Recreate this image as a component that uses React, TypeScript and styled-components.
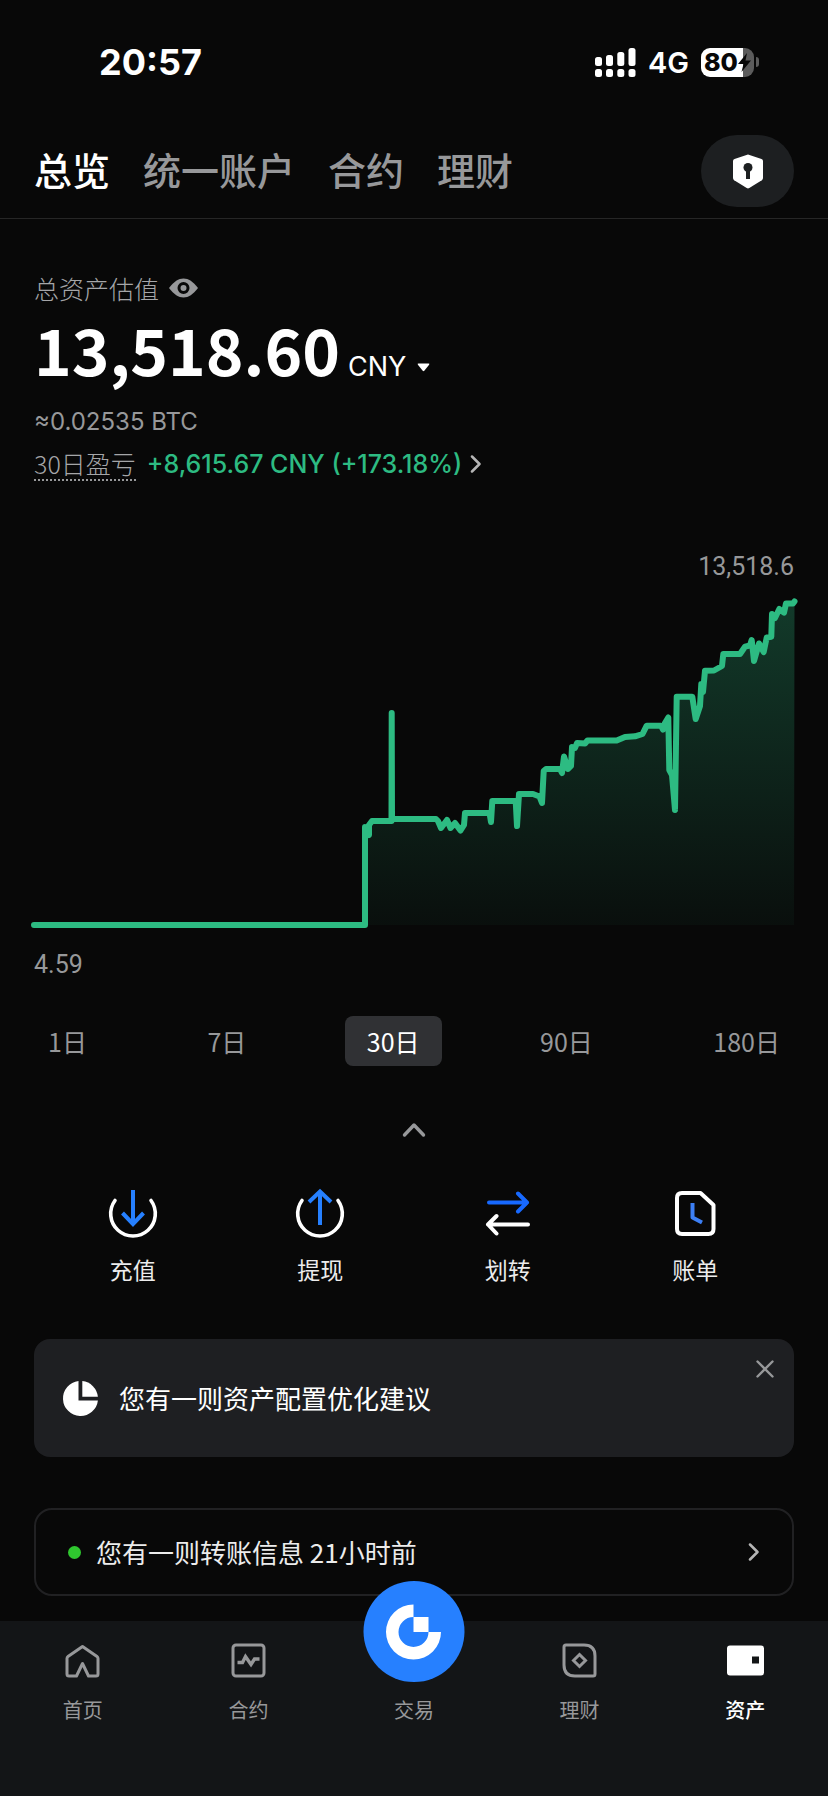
import React, { useState } from 'react';
import styled, { createGlobalStyle } from 'styled-components';

const colors = {
  page: '#080808',
  panel: '#1e1f22',
  bar: '#131517',
  line: '#212123',
  text: '#ffffff',
  soft: '#ececec',
  muted: '#97989a',
  faint: '#a5a6a8',
  green: '#2dbb82',
  blue: '#2680ff',
};

const GlobalStyle = createGlobalStyle`
  *, *::before, *::after { box-sizing: border-box; }
  body {
    margin: 0;
    background: ${colors.page};
    color: ${colors.text};
    font-family: "Noto Sans CJK SC", sans-serif;
  }
  button {
    padding: 0;
    border: 0;
    background: none;
    color: inherit;
    font: inherit;
    cursor: pointer;
  }
  a { color: inherit; text-decoration: none; }
  svg { display: block; flex: none; }
`;

const Screen = styled.div`
  display: flex;
  flex-direction: column;
  min-height: 100vh;
`;

const StatusBar = styled.div`
  display: flex;
  align-items: center;
  justify-content: space-between;
  height: 124px;
  padding: 0 69px 0 99px;
  font-family: Inter, sans-serif;
`;

const Clock = styled.time`
  font-size: 36px;
  font-weight: 700;
`;

const StatusIcons = styled.div`
  display: flex;
  align-items: center;
  gap: 12px;
  font-size: 29px;
  font-weight: 600;
`;

const Battery = styled.div`
  display: flex;
  align-items: center;
  gap: 2px;
`;

const BatteryBody = styled.div`
  display: flex;
  align-items: center;
  width: 53px;
  height: 29px;
  padding-left: 3px;
  border-radius: 9px;
  background: linear-gradient(90deg, #fff 80%, #5c5c5c 80%);
  color: #080808;
  font-size: 25px;
  font-weight: 800;
  line-height: 29px;
`;

const BatteryTip = styled.span`
  width: 3px;
  height: 10px;
  border-radius: 0 3px 3px 0;
  background: #5c5c5c;
`;

const Header = styled.header`
  display: flex;
  align-items: center;
  justify-content: space-between;
  height: 95px;
  padding: 0 34px;
  border-bottom: 1px solid #262626;
`;

const Tabs = styled.nav`
  display: flex;
  gap: 33px;
  padding-bottom: 4px;
`;

const Tab = styled.button<{ $active: boolean }>`
  color: ${(p) => (p.$active ? colors.text : colors.muted)};
  font-size: 38px;
  font-weight: 500;
  line-height: 48px;
`;

const ShieldButton = styled.button`
  display: grid;
  place-items: center;
  width: 93px;
  height: 72px;
  border-radius: 36px;
  background: #1d1f21;
`;

const Main = styled.main`
  display: flex;
  flex-direction: column;
  padding: 53px 34px 25px;
`;

const Row = styled.div`
  display: flex;
  align-items: center;
  gap: 10px;
`;

const Caption = styled.span`
  color: ${colors.faint};
  font-size: 25px;
  font-weight: 300;
  line-height: 32px;
`;

const Total = styled.div`
  display: flex;
  align-items: baseline;
  gap: 8px;
  height: 80px;
  margin: 10px 0 12px;
  line-height: 68px;
`;

const Amount = styled.strong`
  font-size: 64px;
  font-weight: 700;
`;

const Currency = styled.button`
  display: flex;
  align-items: center;
  gap: 11px;
  font-family: Inter, sans-serif;
  font-size: 27px;
  line-height: 32px;
`;

const Converted = styled.div`
  color: ${colors.muted};
  font-family: Inter, sans-serif;
  font-size: 24px;
  line-height: 32px;
`;

const PnlRow = styled.div`
  display: flex;
  align-items: center;
  gap: 11px;
  margin-top: 9px;
`;

const PnlLabel = styled.span`
  border-bottom: 2px dotted ${colors.muted};
  color: ${colors.faint};
  font-size: 25px;
  font-weight: 300;
  line-height: 32px;
`;

const PnlLink = styled.a`
  display: flex;
  align-items: center;
  gap: 8px;
  color: ${colors.green};
  font-family: Inter, sans-serif;
  font-size: 25px;
  font-weight: 500;
  line-height: 32px;
`;

const ChartFigure = styled.figure`
  display: flex;
  flex-direction: column;
  margin: 70px 0 35px;
`;

const ChartLabel = styled.span<{ $end?: boolean }>`
  align-self: ${(p) => (p.$end ? 'flex-end' : 'flex-start')};
  color: ${colors.muted};
  font-family: Roboto, sans-serif;
  font-size: 25px;
  line-height: 32px;
`;

const ChartSvg = styled.svg`
  width: 100%;
  height: 328px;
  margin: 17px 0 21px;
  overflow: visible;
`;

const Ranges = styled.div`
  display: flex;
  justify-content: space-between;
  margin: 0 -8px;
`;

const Range = styled.button<{ $active: boolean }>`
  height: 50px;
  padding: 0 22px;
  border-radius: 8px;
  background: ${(p) => (p.$active ? '#303134' : 'transparent')};
  color: ${(p) => (p.$active ? colors.text : colors.muted)};
  font-size: 25px;
`;

const CollapseButton = styled.button`
  align-self: center;
  margin: 48px 0 42px;
  padding: 8px;
`;

const Actions = styled.div`
  display: grid;
  grid-template-columns: repeat(4, 1fr);
  padding: 0 5px;
`;

const Action = styled.button`
  display: flex;
  flex-direction: column;
  align-items: center;
  gap: 15px;
  color: ${colors.soft};
  font-size: 23px;
  line-height: 32px;
`;

const Suggestion = styled.section`
  display: flex;
  align-items: center;
  height: 118px;
  margin: 54px 0 51px;
  padding: 0 20px 0 28px;
  border-radius: 16px;
  background: ${colors.panel};
`;

const CardText = styled.span`
  flex: 1;
  font-size: 26px;
  line-height: 32px;
`;

const SuggestionText = styled(CardText)`
  margin-left: 20px;
`;

const CloseButton = styled.button`
  align-self: flex-start;
  margin-top: 21px;
`;

const Notice = styled.a`
  display: flex;
  align-items: center;
  height: 88px;
  padding: 0 32px;
  border: 2px solid ${colors.line};
  border-radius: 18px;
  color: ${colors.soft};
`;

const Dot = styled.span`
  width: 13px;
  height: 13px;
  margin-right: 15px;
  border-radius: 50%;
  background: #2fc72f;
`;

const TabBar = styled.nav`
  position: sticky;
  bottom: 0;
  display: grid;
  grid-template-columns: repeat(5, 1fr);
  margin-top: auto;
  padding: 21px 0 71px;
  background: ${colors.bar};
`;

const TabItem = styled.a<{ $active?: boolean }>`
  position: relative;
  display: flex;
  flex-direction: column;
  align-items: center;
  gap: 16px;
  color: ${(p) => (p.$active ? colors.text : colors.muted)};
  font-size: 20px;
  font-weight: ${(p) => (p.$active ? 500 : 400)};
  line-height: 30px;
`;

const IconSlot = styled.span`
  height: 37px;
`;

const TradeBadge = styled.span`
  position: absolute;
  top: -61px;
  left: 50%;
  display: grid;
  place-items: center;
  width: 101px;
  height: 101px;
  border-radius: 50%;
  background: ${colors.blue};
  transform: translateX(-50%);
`;

const SignalIcon = () => (
  <svg width="41" height="29" viewBox="0 0 41 29" fill="#fff" aria-hidden="true">
    <rect x="0" y="9" width="7" height="9" rx="2.5" />
    <rect x="11" y="7" width="7" height="11" rx="2.5" />
    <rect x="22.3" y="4" width="7" height="14" rx="2.5" />
    <rect x="33.5" y="0" width="7" height="18" rx="2.5" />
    <rect x="0" y="21" width="7" height="8" rx="2.5" />
    <rect x="11" y="21" width="7" height="8" rx="2.5" />
    <rect x="22.3" y="21" width="7" height="8" rx="2.5" />
    <rect x="33.5" y="21" width="7" height="8" rx="2.5" />
  </svg>
);

const BoltIcon = () => (
  <svg width="13" height="19" viewBox="0 0 13 19" fill="#080808" aria-hidden="true">
    <path d="M9 0 0 11h5.5L3.5 19 13 7.5H7.5Z" />
  </svg>
);

const ShieldIcon = () => (
  <svg width="30" height="35" viewBox="0 0 30 35" aria-hidden="true">
    <path d="M15 0.5 28.5 5Q30 5.6 30 7V24Q30 25.5 28.8 26.3L16.3 34Q15 34.8 13.7 34L1.2 26.3Q0 25.5 0 24V7Q0 5.6 1.5 5Z" fill="#fff" />
    <circle cx="15" cy="13.5" r="4.5" fill="#1d1f21" />
    <path d="M15 15v10" stroke="#1d1f21" strokeWidth="4" />
  </svg>
);

const EyeIcon = () => (
  <svg width="29" height="20" viewBox="0 0 29 20" aria-hidden="true">
    <path d="M0 10C5 3.5 9.5 0.5 14.5 0.5S24 3.5 29 10C24 16.5 19.5 19.5 14.5 19.5S5 16.5 0 10Z" fill={colors.muted} />
    <circle cx="14.5" cy="10" r="4.5" fill="none" stroke={colors.page} strokeWidth="3" />
  </svg>
);

const CaretDown = () => (
  <svg width="13" height="9" viewBox="0 0 13 9" fill="currentColor" aria-hidden="true">
    <path d="M1.5 0.5H11.5Q13 0.5 12.1 1.7L7.3 7.8Q6.5 8.7 5.7 7.8L0.9 1.7Q0 0.5 1.5 0.5Z" />
  </svg>
);

const ChevronRight = ({ color }: { color: string }) => (
  <svg width="12" height="18" viewBox="0 0 12 18" fill="none" stroke={color} strokeWidth="2.5" strokeLinecap="round" strokeLinejoin="round" aria-hidden="true">
    <path d="M2 1.5 9.5 9 2 16.5" />
  </svg>
);

const ChevronUp = () => (
  <svg width="24" height="16" viewBox="0 0 24 16" fill="none" stroke={colors.muted} strokeWidth="3.4" strokeLinecap="round" strokeLinejoin="round" aria-hidden="true">
    <path d="M2.5 13 12 3l9.5 10" />
  </svg>
);

const CloseIcon = () => (
  <svg width="18" height="18" viewBox="0 0 18 18" stroke={colors.muted} strokeWidth="2.4" strokeLinecap="round" aria-hidden="true">
    <path d="M1.5 1.5 16.5 16.5M16.5 1.5 1.5 16.5" />
  </svg>
);

const PieIcon = () => (
  <svg width="37" height="37" viewBox="0 0 37 37" fill="#fff" aria-hidden="true">
    <path d="M16.5 1.1A17.5 17.5 0 1 0 35.9 20.5H16.5Z" />
    <path d="M20.3 1.1A17.5 17.5 0 0 1 35.9 16.7H20.3Z" />
  </svg>
);

const actionIconProps = {
  width: 50,
  height: 50,
  viewBox: '0 0 50 50',
  fill: 'none',
  strokeLinecap: 'round' as const,
  strokeLinejoin: 'round' as const,
  'aria-hidden': true,
};

const DepositIcon = () => (
  <svg {...actionIconProps}>
    <path d="M7 12.5A22.3 22.3 0 1 0 43 12.5" stroke="#fff" strokeWidth="3.6" />
    <path d="M25 2V36M14.5 25 25 36 35.5 25" stroke={colors.blue} strokeWidth="4" strokeLinejoin="miter" strokeLinecap="butt" />
  </svg>
);

const WithdrawIcon = () => (
  <svg {...actionIconProps}>
    <path d="M7 12.5A22.3 22.3 0 1 0 43 12.5" stroke="#fff" strokeWidth="3.6" />
    <path d="M25 37V3M14 14 25 3.5 36 14" stroke={colors.blue} strokeWidth="4" strokeLinejoin="miter" strokeLinecap="butt" />
  </svg>
);

const TransferIcon = () => (
  <svg {...actionIconProps} strokeWidth="4">
    <path d="M6 14.5H44M35 5.5 44 14.5 35 23.5" stroke="#1769ff" />
    <path d="M45 36.5H5M13.5 28 5 36.5 13.5 45.5" stroke="#fff" />
  </svg>
);

const BillIcon = () => (
  <svg {...actionIconProps}>
    <path d="M12 5H30.5L43.5 17V41Q43.5 46 38.5 46H12Q7 46 7 41V10Q7 5 12 5Z" stroke="#fff" strokeWidth="4" />
    <path d="M22.5 15V29.5L32 34.5" stroke="#3c7ff5" strokeWidth="4" strokeLinecap="butt" />
  </svg>
);

const navIconProps = {
  width: 37,
  height: 37,
  viewBox: '0 0 37 37',
  fill: 'none',
  stroke: 'currentColor',
  strokeWidth: 3,
  strokeLinejoin: 'round' as const,
  'aria-hidden': true,
};

const HomeIcon = () => (
  <svg {...navIconProps}>
    <path d="M18.5 4.5 33 14.5Q34 15.2 34 16.5V32Q34 34 32 34H24.5L18.5 21.5 12.5 34H5Q3 34 3 32V16.5Q3 15.2 4 14.5Z" />
  </svg>
);

const FuturesIcon = () => (
  <svg {...navIconProps}>
    <rect x="3" y="3" width="31" height="31" rx="3" />
    <path d="M7.5 20.5H12.5L15.5 14.5 21 22.5 24.5 17H29.5" strokeWidth="3.4" strokeLinejoin="miter" />
  </svg>
);

const EarnIcon = () => (
  <svg {...navIconProps}>
    <path d="M5 3H23Q34 3 34 14V32Q34 34 32 34H14Q3 34 3 23V5Q3 3 5 3Z" />
    <path d="M18.5 12.5 24.5 18.5 18.5 24.5 12.5 18.5Z" strokeLinejoin="miter" />
  </svg>
);

const WalletIcon = () => (
  <svg {...navIconProps} stroke="none" fill="currentColor">
    <path fillRule="evenodd" d="M3 3.5H34Q37 3.5 37 6.5V30.5Q37 33.5 34 33.5H3Q0 33.5 0 30.5V6.5Q0 3.5 3 3.5ZM25 14.5V21.5H32V14.5Z" />
  </svg>
);

const TradeLogo = () => (
  <svg width="56" height="56" viewBox="0 0 56 56" fill="#fff" aria-hidden="true">
    <path d="M28 0.5A27.5 27.5 0 1 0 55.5 28H43A15 15 0 1 1 28 13Z" />
    <path d="M28 13H43V28H28Z" />
  </svg>
);

// Equity curve in chart units: 760 wide, baseline at 325.
const curve: [number, number][] = [
  [0, 325], [331, 325], [331, 227], [335, 235], [335, 225], [338, 221], [357.5, 221], [357.7, 113], [358, 219],
  [402, 219], [404, 221], [407, 228], [413, 220], [416.5, 228], [421, 223], [426.5, 230.5], [430, 225], [431, 213],
  [455.5, 212.7], [457, 222], [458.3, 201], [481.7, 201], [483, 226], [485, 194], [499, 194], [505.5, 196.5],
  [508, 203], [509.7, 171], [512, 169], [526, 169], [528, 173], [530, 156.5], [534, 169], [537, 166], [538, 147],
  [541, 148], [543, 143], [551, 143.5], [553.5, 140.5], [582.7, 140.5], [591, 137], [601, 136.3], [608.5, 134],
  [612.7, 125.7], [627, 125.7], [629, 129.5], [631, 123], [634.3, 117.5], [635.3, 170], [638, 175], [641, 210],
  [642.7, 96.7], [658.3, 96.7], [661.7, 119], [666, 106], [667.3, 84], [669, 92], [671, 70.7], [680, 70.5],
  [688, 66], [689.3, 54], [706, 54], [711, 46.7], [716, 45.5], [717.7, 40], [720, 61], [725, 43.5],
  [729.7, 52], [732.7, 37.5], [737.3, 36.7], [738, 14], [741, 18], [745.3, 9], [750, 12.7], [752, 3.5],
  [759, 3.5], [760.5, 1.5],
];
const curvePoints = curve.map(([x, y]) => `${x},${y}`).join(' ');

const EquityChart = () => (
  <ChartSvg viewBox="0 0 760 328" preserveAspectRatio="none" role="img" aria-label="30日资产走势">
    <defs>
      <linearGradient id="equityFill" gradientUnits="userSpaceOnUse" x1="0" y1="0" x2="0" y2="325">
        <stop offset="0" stopColor={colors.green} stopOpacity="0.28" />
        <stop offset="1" stopColor={colors.green} stopOpacity="0.04" />
      </linearGradient>
    </defs>
    <polygon points={`${curvePoints} 760,325`} fill="url(#equityFill)" />
    <polyline
      points={curvePoints}
      fill="none"
      stroke={colors.green}
      strokeWidth="6"
      strokeLinecap="round"
      strokeLinejoin="round"
      vectorEffect="non-scaling-stroke"
    />
  </ChartSvg>
);

const accountTabs = ['总览', '统一账户', '合约', '理财'];
const rangeOptions = ['1日', '7日', '30日', '90日', '180日'];
const actions = [
  { label: '充值', icon: <DepositIcon /> },
  { label: '提现', icon: <WithdrawIcon /> },
  { label: '划转', icon: <TransferIcon /> },
  { label: '账单', icon: <BillIcon /> },
];
const navItems = [
  { label: '首页', icon: <HomeIcon /> },
  { label: '合约', icon: <FuturesIcon /> },
  { label: '交易', icon: <TradeBadge><TradeLogo /></TradeBadge> },
  { label: '理财', icon: <EarnIcon /> },
  { label: '资产', icon: <WalletIcon />, active: true },
];

export default function App() {
  const [tab, setTab] = useState('总览');
  const [range, setRange] = useState('30日');

  return (
    <Screen>
      <GlobalStyle />
      <StatusBar>
        <Clock>20:57</Clock>
        <StatusIcons>
          <SignalIcon />
          <span>4G</span>
          <Battery>
            <BatteryBody>80<BoltIcon /></BatteryBody>
            <BatteryTip />
          </Battery>
        </StatusIcons>
      </StatusBar>

      <Header>
        <Tabs>
          {accountTabs.map((name) => (
            <Tab key={name} type="button" $active={name === tab} onClick={() => setTab(name)}>
              {name}
            </Tab>
          ))}
        </Tabs>
        <ShieldButton type="button" aria-label="安全">
          <ShieldIcon />
        </ShieldButton>
      </Header>

      <Main>
        <Row>
          <Caption>总资产估值</Caption>
          <button type="button" aria-label="隐藏金额">
            <EyeIcon />
          </button>
        </Row>
        <Total>
          <Amount>13,518.60</Amount>
          <Currency type="button">
            CNY
            <CaretDown />
          </Currency>
        </Total>
        <Converted>≈0.02535 BTC</Converted>
        <PnlRow>
          <PnlLabel>30日盈亏</PnlLabel>
          <PnlLink href="#pnl">
            +8,615.67 CNY (+173.18%)
            <ChevronRight color="#b5b5b5" />
          </PnlLink>
        </PnlRow>

        <ChartFigure>
          <ChartLabel $end>13,518.6</ChartLabel>
          <EquityChart />
          <ChartLabel>4.59</ChartLabel>
        </ChartFigure>

        <Ranges>
          {rangeOptions.map((name) => (
            <Range key={name} type="button" $active={name === range} onClick={() => setRange(name)}>
              {name}
            </Range>
          ))}
        </Ranges>
        <CollapseButton type="button" aria-label="收起">
          <ChevronUp />
        </CollapseButton>

        <Actions>
          {actions.map(({ label, icon }) => (
            <Action key={label} type="button">
              {icon}
              {label}
            </Action>
          ))}
        </Actions>

        <Suggestion>
          <PieIcon />
          <SuggestionText>您有一则资产配置优化建议</SuggestionText>
          <CloseButton type="button" aria-label="关闭">
            <CloseIcon />
          </CloseButton>
        </Suggestion>

        <Notice href="#notice">
          <Dot />
          <CardText>您有一则转账信息 21小时前</CardText>
          <ChevronRight color="#b5b5b5" />
        </Notice>
      </Main>

      <TabBar>
        {navItems.map(({ label, icon, active }) => (
          <TabItem key={label} href={`#${label}`} $active={active}>
            <IconSlot>{icon}</IconSlot>
            {label}
          </TabItem>
        ))}
      </TabBar>
    </Screen>
  );
}
